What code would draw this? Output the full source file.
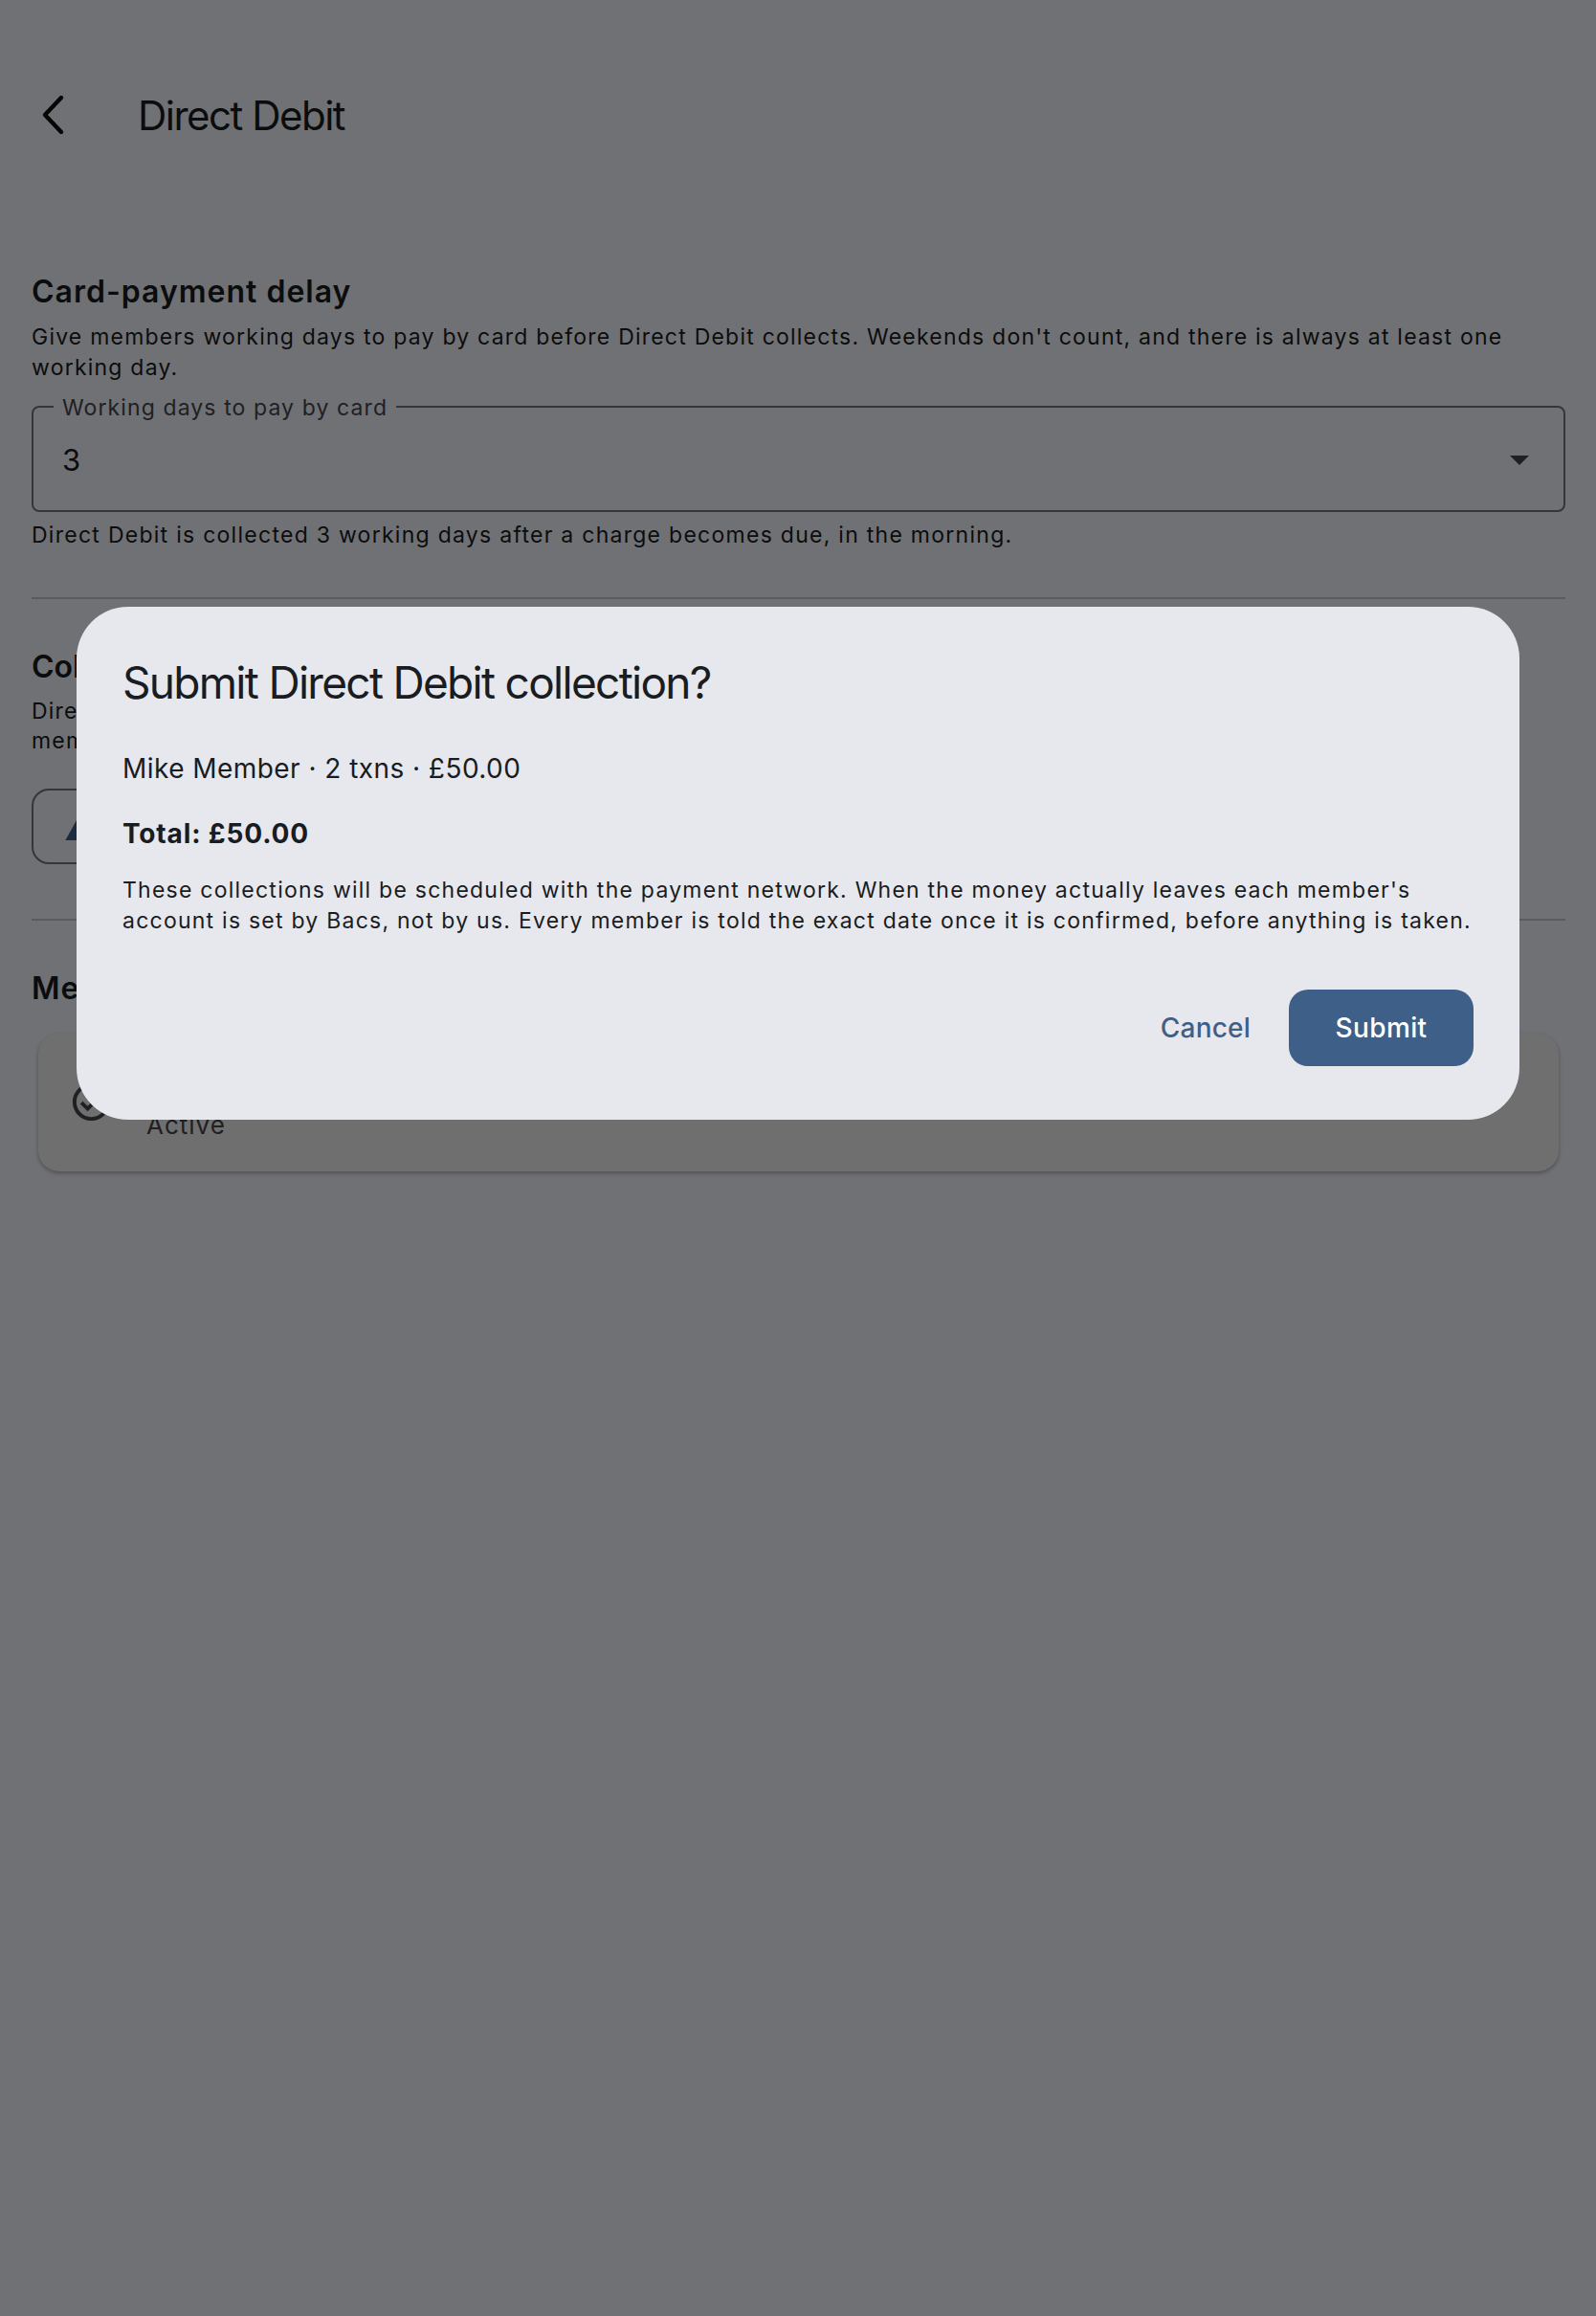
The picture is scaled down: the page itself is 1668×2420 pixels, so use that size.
<template>
  <div class="page">
    <header class="bar">
      <svg class="back" viewBox="0 0 30 44" width="30" height="44" aria-hidden="true">
        <path d="M23 4 L6 22 L23 40" fill="none" stroke="#0b0d0f" stroke-width="4.4" stroke-linecap="round" stroke-linejoin="round" />
      </svg>
      <h1 class="bar-title">Direct Debit</h1>
    </header>
    <main class="content">
      <section>
        <h2 class="heading">Card-payment delay</h2>
        <p class="text">Give members working days to pay by card before Direct Debit collects. Weekends don't count, and there is always at least one working day.</p>
        <div class="field">
          <span class="label">Working days to pay by card</span>
          <span class="value">3</span>
          <span class="tri"></span>
        </div>
        <p class="text helper">Direct Debit is collected 3 working days after a charge becomes due, in the morning.</p>
      </section>
      <hr class="rule" />
      <section class="second">
        <h2 class="heading snug">Collections</h2>
        <p class="text close">Direct Debit collections are submitted by you for members with amounts due, and each<br />member is told before anything is taken.</p>
        <div class="outline-btn">
          <svg viewBox="0 0 24 24" width="40" height="40" aria-hidden="true"><path d="M12 3 2 21h20z" fill="#3e6088" /></svg>
        </div>
      </section>
      <hr class="rule tight" />
      <section class="third">
        <h2 class="heading">Members</h2>
        <div class="card">
          <svg class="status" viewBox="0 0 24 24" width="47" height="47" aria-hidden="true">
            <path fill="#44474e" d="M12 2C6.48 2 2 6.48 2 12s4.48 10 10 10 10-4.48 10-10S17.52 2 12 2zm0 18c-4.41 0-8-3.59-8-8s3.59-8 8-8 8 3.59 8 8-3.59 8-8 8zm4.59-12.42L10 14.17l-2.59-2.58L6 13l4 4 8-8z" />
          </svg>
          <div class="card-text">
            <div class="card-name">Mike Member</div>
            <div class="card-sub">Active</div>
          </div>
        </div>
      </section>
    </main>
    <div class="scrim">
      <div class="dialog" role="dialog">
        <h3 class="dlg-title">Submit Direct Debit collection?</h3>
        <p class="dlg-line">Mike Member · 2 txns · £50.00</p>
        <p class="dlg-total">Total: £50.00</p>
        <p class="dlg-note">These collections will be scheduled with the payment network. When the money actually leaves each member's account is set by Bacs, not by us. Every member is told the exact date once it is confirmed, before anything is taken.</p>
        <div class="actions">
          <button class="btn-text">Cancel</button>
          <button class="btn-fill">Submit</button>
        </div>
      </div>
    </div>
  </div>
</template>

<style>
html, body { margin: 0; padding: 0; }
</style>

<style scoped>
.page {
  position: relative;
  width: 1668px;
  height: 2420px;
  overflow: hidden;
  background: #f4f6fe;
  color: #191c20;
  font-family: Inter, "Liberation Sans", sans-serif;
}
.bar {
  height: 240px;
  box-sizing: border-box;
  padding: 98px 0 0 41px;
  display: flex;
  align-items: flex-start;
  gap: 73px;
}
.back { flex: none; }
.bar-title {
  margin: 0;
  font-size: 42px;
  line-height: 46px;
  font-weight: 400;
  letter-spacing: -1.5px;
}
.content { padding: 44px 32px 0 33px; }
.heading {
  margin: 0;
  font-size: 32px;
  line-height: 42px;
  font-weight: 600;
  letter-spacing: 1px;
}
.heading.snug { letter-spacing: 0; }
.text {
  margin: 11px 0 0;
  font-size: 23px;
  line-height: 31.5px;
  letter-spacing: 1.22px;
}
.close { margin-top: 10px; }
.field {
  position: relative;
  margin-top: 24px;
  height: 111px;
  box-sizing: border-box;
  border: 2px solid #74777f;
  border-radius: 8px;
  display: flex;
  align-items: center;
  padding: 2px 0 0 30px;
}
.label {
  position: absolute;
  left: 21px;
  top: -12px;
  padding: 0 9px;
  height: 14px;
  background: #f4f6fe;
  color: #44474e;
  font-size: 23px;
  line-height: 24px;
  letter-spacing: 1.1px;
}
.value { font-size: 31px; letter-spacing: 0.5px; }
.tri {
  position: absolute;
  right: 36px;
  top: 50%;
  margin-top: -4px;
  width: 0;
  height: 0;
  border-left: 10px solid transparent;
  border-right: 10px solid transparent;
  border-top: 10px solid #44474e;
}
.text.helper { margin-top: 9px; letter-spacing: 1.27px; }
.rule {
  margin: 48px 0 0;
  height: 2px;
  border: 0;
  background: #c4c6d0;
}
.second { margin-top: 50px; }
.outline-btn {
  margin-top: 33px;
  width: 360px;
  height: 79px;
  box-sizing: border-box;
  border: 2px solid #74777f;
  border-radius: 18px;
  display: flex;
  align-items: center;
  padding-left: 30px;
}
.rule.tight { margin-top: 57px; }
.third { margin-top: 50px; }
.card {
  margin: 26px 7px 0;
  height: 144px;
  box-sizing: border-box;
  padding: 0 32px;
  border-radius: 22px;
  background: #f2f1f3;
  box-shadow: 0 2px 4px rgba(0, 0, 0, 0.3);
  display: flex;
  align-items: center;
  gap: 34px;
}
.card-name { font-size: 28px; line-height: 48px; }
.card-sub {
  font-size: 26px;
  line-height: 38px;
  color: #44474e;
  letter-spacing: 1px;
}
.scrim {
  position: absolute;
  inset: 0;
  background: rgba(0, 0, 0, 0.54);
}
.dialog {
  position: absolute;
  left: 80px;
  top: 634px;
  width: 1508px;
  height: 536px;
  box-sizing: border-box;
  padding: 48px 48px 56px;
  border-radius: 54px;
  background: #e7e8ee;
  color: #191c20;
  display: flex;
  flex-direction: column;
}
.dlg-title {
  margin: 0;
  font-size: 46px;
  line-height: 62px;
  font-weight: 400;
  letter-spacing: -1.7px;
}
.dlg-line {
  margin: 37.5px 0 0;
  font-size: 28px;
  line-height: 42px;
  letter-spacing: 0.45px;
}
.dlg-total {
  margin: 26px 0 0;
  font-size: 28px;
  line-height: 42px;
  font-weight: 700;
  letter-spacing: 0.85px;
}
.dlg-note {
  margin: 23.5px 0 0;
  font-size: 23px;
  line-height: 31.5px;
  letter-spacing: 1.24px;
}
.actions {
  margin-top: auto;
  display: flex;
  justify-content: flex-end;
  align-items: center;
  gap: 40px;
}
button {
  font-family: inherit;
  font-size: 28px;
  font-weight: 500;
  letter-spacing: 0.4px;
  border: 0;
}
.btn-text { background: none; color: #3e6088; padding: 0; letter-spacing: 0.2px; }
.btn-fill {
  width: 193px;
  height: 80px;
  border-radius: 20px;
  background: #3e6088;
  color: #fff;
}
</style>
